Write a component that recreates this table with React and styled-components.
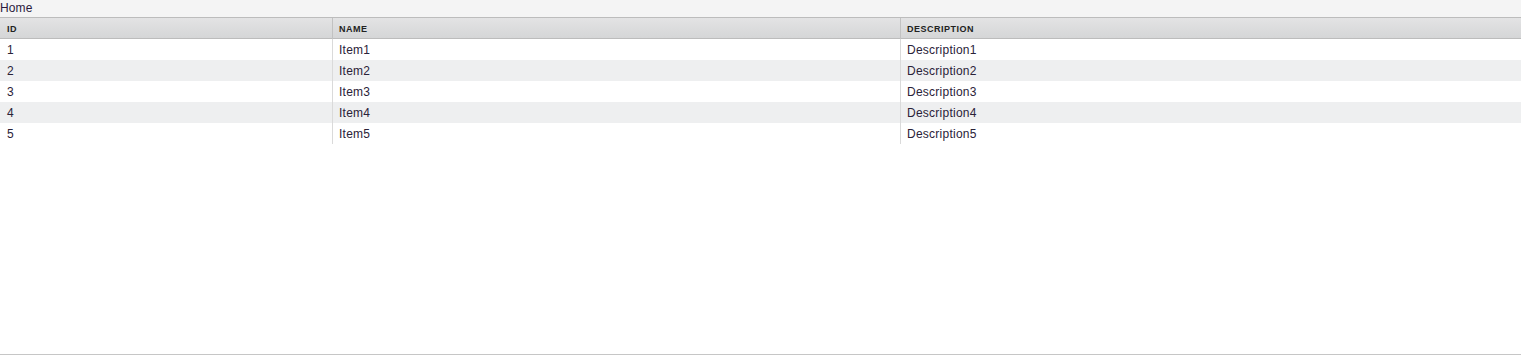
import React from 'react';
import styled, { createGlobalStyle } from 'styled-components';

const GlobalStyle = createGlobalStyle`
  html, body {
    margin: 0;
    padding: 0;
    background: #fff;
  }
  body {
    font-family: "Liberation Sans", Arial, sans-serif;
    color: #333;
  }
`;

const Page = styled.div`
  height: 358px;
  display: flex;
  flex-direction: column;
`;

const Crumb = styled.div`
  height: 17px;
  line-height: 16px;
  font-size: 12px;
  letter-spacing: 0.1px;
  color: #2b1a3d;
  background: #f4f4f4;
`;

const Grid = styled.div`
  flex: 1;
  display: flex;
  flex-direction: column;
  border-bottom: 1px solid #c6c6c6;
  margin-bottom: 3px;
`;

const cols = '332px 568px 1fr';

const Head = styled.div`
  display: grid;
  grid-template-columns: ${cols};
  height: 20px;
  border-top: 1px solid #bcbcbc;
  border-bottom: 1px solid #bcbcbc;
  background: linear-gradient(#e3e3e4, #d5d6d7);
`;

const HeadCell = styled.div`
  padding: 1px 0 0 ${(p) => (p.first ? '7px' : '6px')};
  font-size: 9px;
  font-weight: bold;
  letter-spacing: 0.5px;
  line-height: 20px;
  color: #222;
  border-left: ${(p) => (p.first ? 'none' : '1px solid #c2c2c2')};
`;

const Row = styled.div`
  display: grid;
  grid-template-columns: ${cols};
  height: 21px;
  background: ${(p) => (p.striped ? '#eeeff0' : '#fff')};
`;

const Cell = styled.div`
  padding: 1px 0 0 ${(p) => (p.first ? '7px' : '6px')};
  font-size: 12px;
  letter-spacing: 0.25px;
  line-height: 20px;
  color: #2a2238;
  border-left: ${(p) => (p.first ? 'none' : '1px solid #dadada')};
`;

const items = [1, 2, 3, 4, 5].map((n) => ({
  id: n,
  name: `Item${n}`,
  description: `Description${n}`,
}));

const App = () => (
  <>
    <GlobalStyle />
    <Page>
      <Crumb>Home</Crumb>
      <Grid>
        <Head>
          <HeadCell first>ID</HeadCell>
          <HeadCell>NAME</HeadCell>
          <HeadCell>DESCRIPTION</HeadCell>
        </Head>
        {items.map((item, i) => (
          <Row key={item.id} striped={i % 2 === 1}>
            <Cell first>{item.id}</Cell>
            <Cell>{item.name}</Cell>
            <Cell>{item.description}</Cell>
          </Row>
        ))}
      </Grid>
    </Page>
  </>
);

export default App;
